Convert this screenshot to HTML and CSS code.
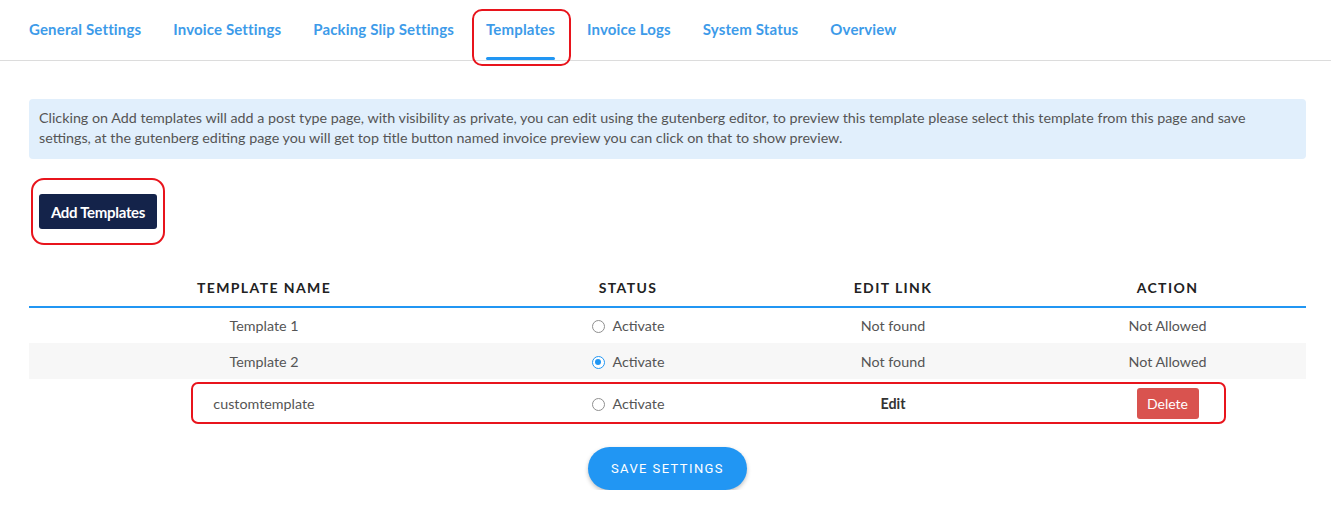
FILE: index.html
```html
<!DOCTYPE html>
<html lang="en">
<head>
<meta charset="utf-8">
<title>Templates</title>
<link rel="stylesheet" href="styles.css">
</head>
<body>
<nav class="tabs">
  <a class="tab">General Settings</a>
  <a class="tab">Invoice Settings</a>
  <a class="tab">Packing Slip Settings</a>
  <a class="tab active">Templates<span class="annot annot-tab"></span></a>
  <a class="tab">Invoice Logs</a>
  <a class="tab">System Status</a>
  <a class="tab">Overview</a>
</nav>
<main class="content">
  <div class="notice">Clicking on Add templates will add a post type page, with visibility as private, you can edit using the gutenberg editor, to preview this template please select this template from this page and save settings, at the gutenberg editing page you will get top title button named invoice preview you can click on that to show preview.</div>
  <div class="add-wrap">
    <button class="btn-add">Add Templates<span class="annot annot-add"></span></button>
  </div>
  <table class="tpl-table">
    <thead>
      <tr>
        <th class="c1">Template Name</th>
        <th class="c2">Status</th>
        <th class="c3">Edit Link</th>
        <th class="c4">Action</th>
      </tr>
    </thead>
    <tbody>
      <tr>
        <td>Template 1</td>
        <td><span class="radio"></span>Activate</td>
        <td>Not found</td>
        <td>Not Allowed</td>
      </tr>
      <tr class="alt">
        <td>Template 2</td>
        <td><span class="radio checked"></span>Activate</td>
        <td>Not found</td>
        <td>Not Allowed</td>
      </tr>
      <tr class="custom">
        <td>customtemplate<span class="annot annot-row"></span></td>
        <td><span class="radio"></span>Activate</td>
        <td class="edit">Edit</td>
        <td><button class="btn-delete">Delete</button></td>
      </tr>
    </tbody>
  </table>
  <div class="save-wrap">
    <button class="btn-save">Save Settings</button>
  </div>
</main>
</body>
</html>
```
FILE: styles.css
```css
* { box-sizing: border-box; }
body {
  margin: 0;
  background: #fff;
  font-family: Lato, "Open Sans", sans-serif;
  color: #555;
}
.tabs {
  display: flex;
  gap: 32px;
  padding-left: 29px;
  height: 61px;
  border-bottom: 1px solid #dcdcdc;
}
.tab {
  position: relative;
  display: flex;
  align-items: center;
  height: 60px;
  padding-bottom: 3px;
  font-size: 15px;
  letter-spacing: 0.15px;
  font-weight: 700;
  color: #3d9be9;
  text-decoration: none;
  white-space: nowrap;
}
.tab.active::after {
  content: "";
  position: absolute;
  left: 0;
  right: 0;
  bottom: 0;
  height: 3px;
  background: #2196f3;
  border-radius: 2px;
}
.annot {
  position: absolute;
  border: 2px solid #e8141c;
  pointer-events: none;
}
.annot-tab {
  left: -14px;
  right: -16px;
  top: 9px;
  bottom: -6px;
  border-radius: 10px;
}
.content {
  position: relative;
  padding: 38px 25px 0 29px;
}
.notice {
  background: #e1effc;
  border-radius: 4px;
  padding: 9px 12px 11px 10px;
  font-size: 14.3px;
  line-height: 20px;
  color: #555;
}
.add-wrap {
  padding: 35px 0 0 10px;
}
.btn-add {
  position: relative;
  height: 35px;
  width: 118px;
  border: none;
  border-radius: 3px;
  background: #14234a;
  color: #fff;
  font-family: Lato, sans-serif;
  font-weight: 700;
  font-size: 15px;
  letter-spacing: -0.3px;
  padding: 0;
}
.annot-add {
  left: -8px;
  right: -8px;
  top: -16px;
  bottom: -16px;
  border-radius: 13px;
}
.tpl-table {
  width: 100%;
  margin-top: 36px;
  border-collapse: collapse;
  font-size: 14.3px;
}
.tpl-table th {
  height: 42px;
  padding: 4px 0 0;
  text-transform: uppercase;
  letter-spacing: 1.4px;
  font-weight: 700;
  font-size: 14px;
  color: #222;
  border-bottom: 2px solid #2196f3;
}
.c1 { width: 470px; }
.c2 { width: 258px; }
.c3 { width: 272px; }
.tpl-table td {
  height: 36px;
  padding: 0;
  text-align: center;
  color: #555;
}
.tpl-table tr.alt td { background: #f7f7f7; }
.tpl-table tr.custom td {
  height: 47px;
  padding-top: 1px;
}
.tpl-table td:first-child { position: relative; }
.annot-row {
  left: 162px;
  width: 1035px;
  top: 3px;
  bottom: 2px;
  border-radius: 7px;
}
.tpl-table td.edit {
  font-weight: 700;
  color: #333;
}
.radio {
  display: inline-block;
  width: 13px;
  height: 13px;
  border: 1px solid #8f8f8f;
  border-radius: 50%;
  vertical-align: -2px;
  margin-right: 8px;
  background: #fff;
  position: relative;
}
.radio.checked {
  border-color: #2196f3;
}
.radio.checked::after {
  content: "";
  position: absolute;
  left: 2.5px;
  top: 2.5px;
  width: 6px;
  height: 6px;
  border-radius: 50%;
  background: #2196f3;
}
.btn-delete {
  width: 62px;
  height: 31px;
  border: none;
  border-radius: 3px;
  background: #d9534f;
  color: #fff;
  font-family: Lato, sans-serif;
  font-size: 14px;
  padding: 0;
}
.save-wrap {
  display: flex;
  justify-content: center;
  padding-top: 21px;
}
.btn-save {
  width: 159px;
  height: 43px;
  border: none;
  border-radius: 22px;
  background: #2196f3;
  color: #fff;
  font-family: Roboto, sans-serif;
  font-weight: 400;
  font-size: 13px;
  letter-spacing: 1.4px;
  text-transform: uppercase;
  box-shadow: 0 2px 4px rgba(0,0,0,0.25);
  padding: 0;
}
```
